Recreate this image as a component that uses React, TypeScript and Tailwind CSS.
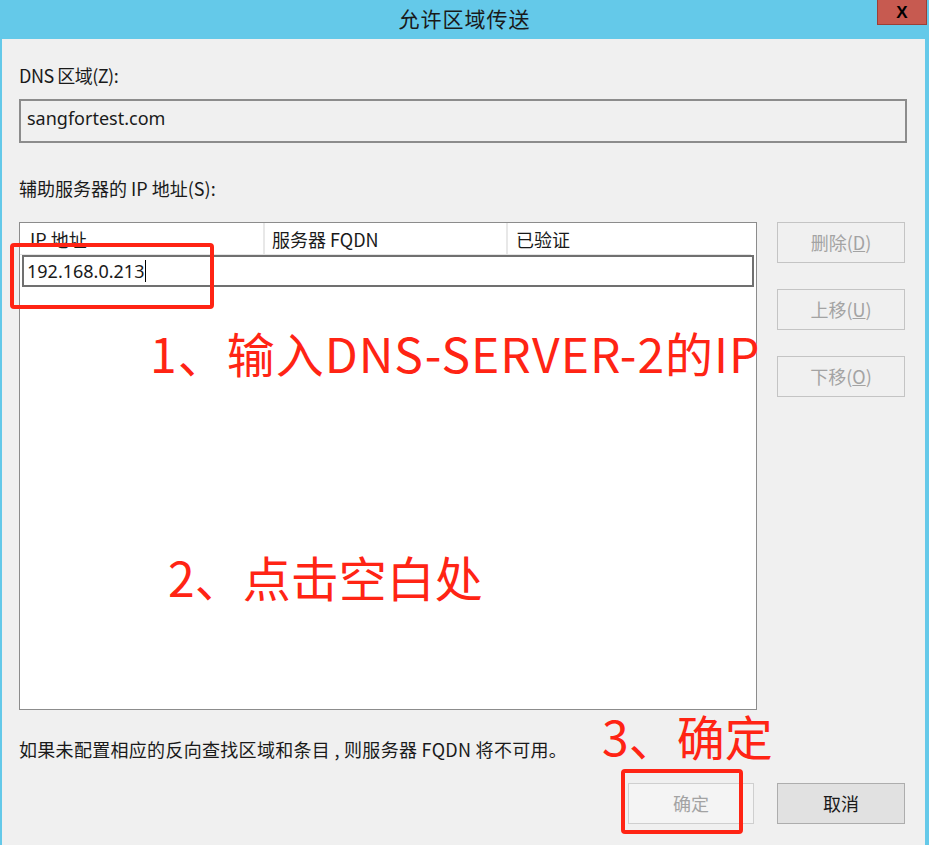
import React from 'react';

const ui = { fontFamily: '"Noto Sans", "Noto Sans CJK SC", sans-serif' };
const cjk = { fontFamily: '"Noto Sans CJK SC", "Noto Sans", sans-serif' };

function SideButton({ label, hotkey }: { label: string; hotkey: string }) {
  return (
    <div className="w-[128px] h-[41px] border border-[#c4c4c4] bg-[#f0f0f0] flex items-center justify-center text-[18px] text-[#a3a3a3]">
      {label}(<span className="underline">{hotkey}</span>)
    </div>
  );
}

export default function App() {
  return (
    <div className="w-[929px] h-[845px] bg-[#64c9e9] flex flex-col overflow-hidden relative" style={cjk}>
      {/* title bar */}
      <div className="h-[39px] relative flex items-center justify-center">
        <span className="text-[21px] text-[#1a1a1a] tracking-[1px] -mt-[1px]">允许区域传送</span>
        <div className="absolute left-[877px] top-0 w-[50px] h-[25px] bg-[#c75a50] border border-[#9c3f36] border-t-0 flex items-center justify-center">
          <span className="text-[17px] font-bold text-black leading-none" style={{ fontFamily: '"Liberation Sans", sans-serif' }}>
            X
          </span>
        </div>
      </div>

      {/* body */}
      <div className="flex-1 ml-[2px] mr-[4px] bg-[#f0f0f0] flex flex-col pl-[17px] pr-[18px] text-[#1a1a1a]">
        <div className="mt-[24px] h-[24px] text-[18px] leading-[24px] tracking-[-0.5px]">DNS 区域(Z):</div>
        <div className="mt-[12px] h-[44px] border-2 border-[#8c8c8c] bg-[#f0f0f0] pl-[6px] pt-[4px] text-[18px]" style={ui}>
          sangfortest.com
        </div>

        <div className="mt-[33px] h-[24px] text-[18px] leading-[24px]">辅助服务器的 IP 地址(S):</div>

        <div className="mt-[22px] flex gap-[20px]">
          {/* list */}
          <div className="w-[738px] h-[488px] border border-[#8c8c8c] bg-white flex flex-col">
            <div className="h-[32px] flex mr-[5px] border-b border-[#e5e5e5] text-[18px] leading-[32px]">
              <div className="w-[245px] pl-[10px] border-r-2 border-[#e8e8e8]">IP 地址</div>
              <div className="w-[243px] pl-[7px] border-r-2 border-[#e8e8e8]">服务器 FQDN</div>
              <div className="flex-1 pl-[8px]">已验证</div>
            </div>
            <div className="ml-[2px] mr-[2px] h-[32px] border-2 border-[#707070] bg-white flex items-center pl-[3px] text-[18px]" style={ui}>
              <span>192.168.0.213</span>
              <span className="w-[1px] h-[22px] bg-black ml-[1px]" />
            </div>
          </div>

          {/* side buttons */}
          <div className="flex flex-col gap-[26px]">
            <SideButton label="删除" hotkey="D" />
            <SideButton label="上移" hotkey="U" />
            <SideButton label="下移" hotkey="O" />
          </div>
        </div>

        <div className="mt-[27px] h-[24px] text-[18px] leading-[24px] tracking-[0.3px]">
          如果未配置相应的反向查找区域和条目 , 则服务器 FQDN 将不可用。
        </div>

        <div className="mt-[22px] mr-[2px] flex justify-end gap-[23px]">
          <div className="w-[126px] h-[41px] border border-[#cfcfcf] bg-[#f4f4f4] flex items-center justify-center text-[18px] text-[#a3a3a3]">
            确定
          </div>
          <div className="w-[128px] h-[41px] border border-[#adadad] bg-[#e1e1e1] flex items-center justify-center text-[18px] text-[#1a1a1a]">
            取消
          </div>
        </div>
      </div>

      {/* red annotations */}
      <div className="absolute left-[10px] top-[243px] w-[204px] h-[66px] border-[4px] border-[#ff2414] rounded-[4px]" />
      <div className="absolute left-[621px] top-[769px] w-[122px] h-[65px] border-[4px] border-[#ff2414] rounded-[4px]" />
      <div className="absolute left-[150px] top-[320px] text-[48px] leading-[64px] tracking-[1px] text-[#ff2414] whitespace-nowrap">
        1、输入DNS-SERVER-2的IP
      </div>
      <div className="absolute left-[168px] top-[544px] text-[48px] leading-[64px] text-[#ff2414] whitespace-nowrap">
        2、点击空白处
      </div>
      <div className="absolute left-[602px] top-[703px] text-[48px] leading-[64px] text-[#ff2414] whitespace-nowrap">
        3、确定
      </div>
    </div>
  );
}
